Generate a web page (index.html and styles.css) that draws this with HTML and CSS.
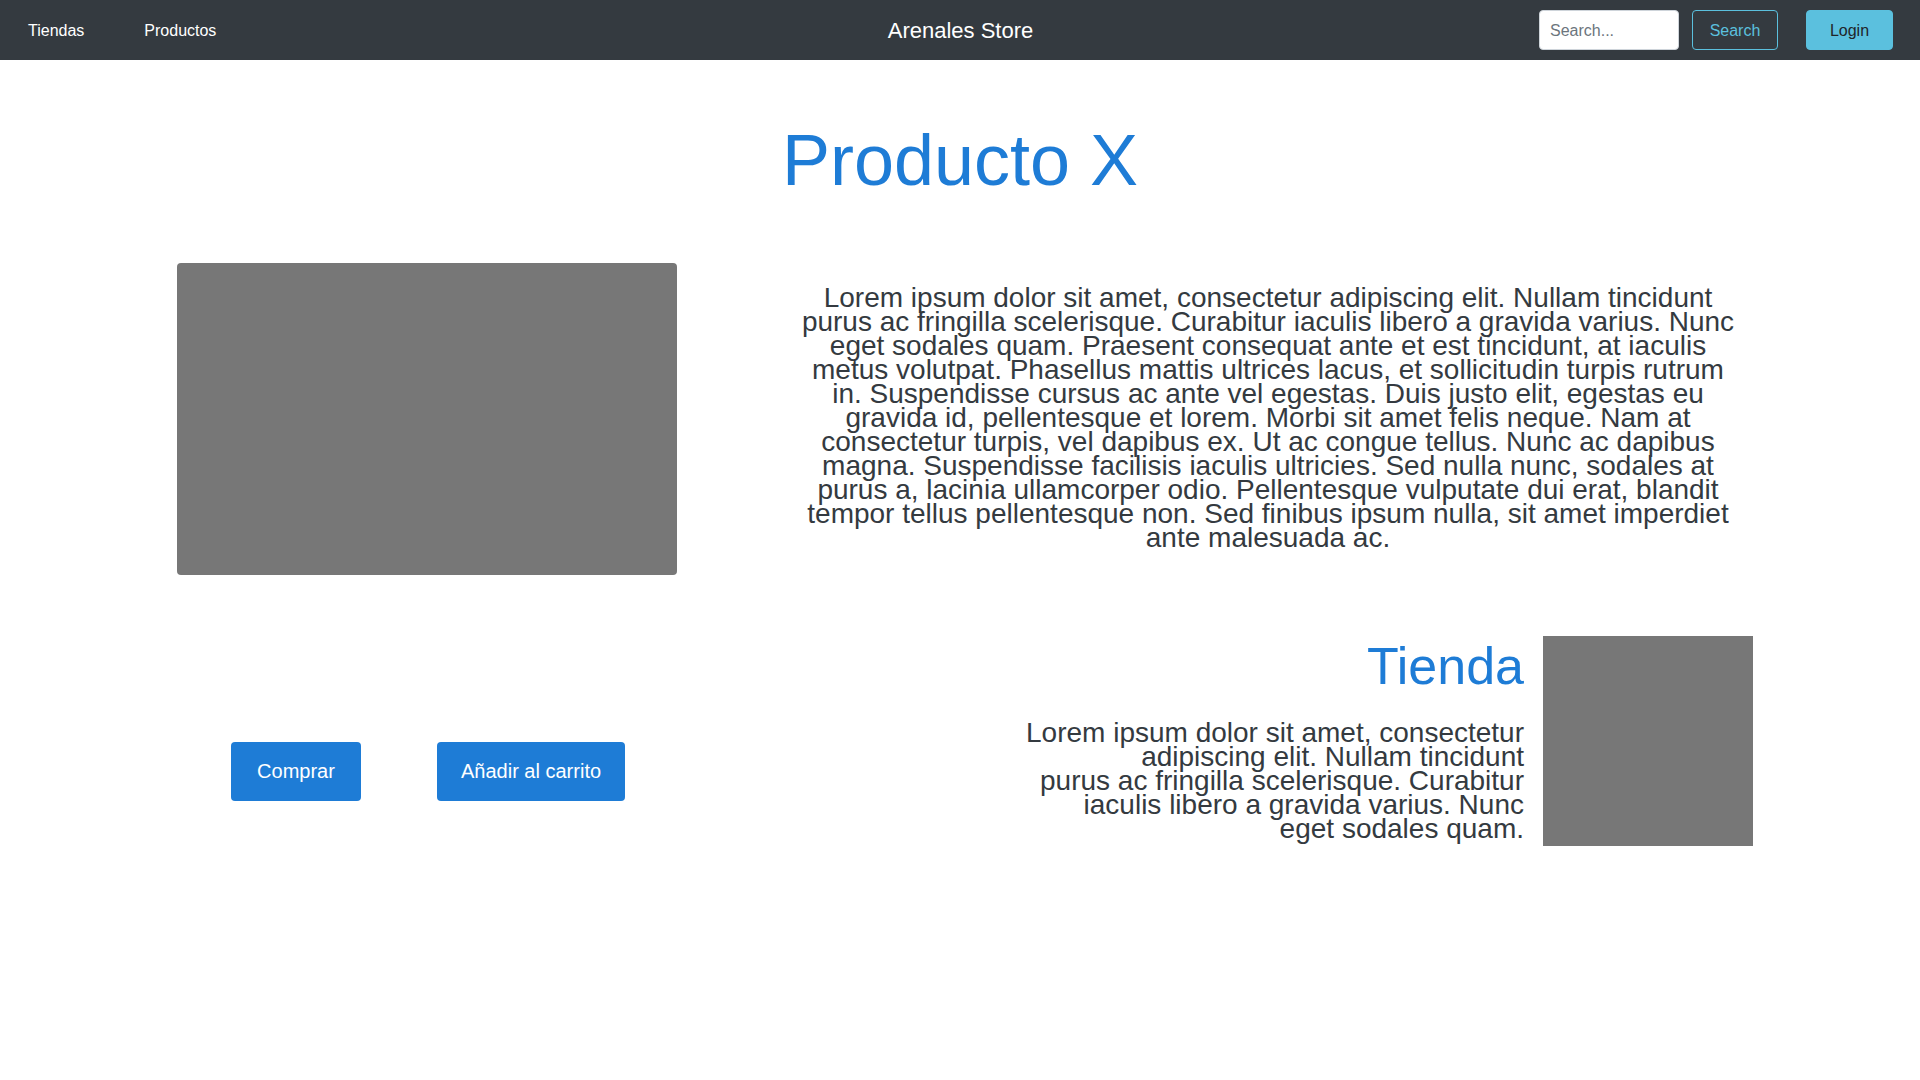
FILE: index.html
```html
<!DOCTYPE html>
<html lang="es">
<head>
<meta charset="utf-8">
<title>Arenales Store</title>
<link rel="stylesheet" href="styles.css">
</head>
<body>
<nav class="navbar">
  <div class="nav-left">
    <a class="nav-link" href="#">Tiendas</a>
    <a class="nav-link" href="#">Productos</a>
  </div>
  <div class="brand">Arenales Store</div>
  <div class="nav-right">
    <input class="search-input" type="text" placeholder="Search...">
    <button class="btn-outline-info">Search</button>
    <button class="btn-info">Login</button>
  </div>
</nav>
<main>
  <h1 class="title">Producto X</h1>
  <section class="product-row">
    <div class="product-image"></div>
    <p class="product-desc">Lorem ipsum dolor sit amet, consectetur adipiscing elit. Nullam tincidunt purus ac fringilla scelerisque. Curabitur iaculis libero a gravida varius. Nunc eget sodales quam. Praesent consequat ante et est tincidunt, at iaculis metus volutpat. Phasellus mattis ultrices lacus, et sollicitudin turpis rutrum in. Suspendisse cursus ac ante vel egestas. Duis justo elit, egestas eu gravida id, pellentesque et lorem. Morbi sit amet felis neque. Nam at consectetur turpis, vel dapibus ex. Ut ac congue tellus. Nunc ac dapibus magna. Suspendisse facilisis iaculis ultricies. Sed nulla nunc, sodales at purus a, lacinia ullamcorper odio. Pellentesque vulputate dui erat, blandit tempor tellus pellentesque non. Sed finibus ipsum nulla, sit amet imperdiet ante malesuada ac.</p>
  </section>
  <section class="store-row">
    <div class="actions">
      <button class="btn-primary btn-buy">Comprar</button>
      <button class="btn-primary">Añadir al carrito</button>
    </div>
    <div class="store">
      <div class="store-info">
        <h2 class="store-title">Tienda</h2>
        <p class="store-desc">Lorem ipsum dolor sit amet, consectetur adipiscing elit. Nullam tincidunt<br>purus ac fringilla scelerisque. Curabitur iaculis libero a gravida varius. Nunc eget sodales quam.</p>
      </div>
      <div class="store-image"></div>
    </div>
  </section>
</main>
</body>
</html>
```
FILE: styles.css
```css
* { box-sizing: border-box; }

body {
  margin: 0;
  font-family: "Liberation Sans", Arial, sans-serif;
  background: #ffffff;
  color: #343a40;
}

.navbar {
  height: 60px;
  background: #343a40;
  display: grid;
  grid-template-columns: 1fr auto 1fr;
  align-items: center;
  padding: 0 27px 0 28px;
}

.nav-left {
  display: flex;
  gap: 60px;
  padding-top: 1px;
}

.nav-link {
  color: #ffffff;
  text-decoration: none;
  font-size: 16px;
}

.brand {
  color: #ffffff;
  font-size: 22px;
  padding-top: 1px;
}

.nav-right {
  display: flex;
  justify-content: flex-end;
  align-items: center;
}

.search-input {
  width: 140px;
  height: 40px;
  border: 1px solid #ced4da;
  border-radius: 4px;
  padding: 2px 10px 0;
  font-family: inherit;
  font-size: 16px;
  color: #495057;
  background: #fff;
}

.search-input::placeholder { color: #6c757d; }

.btn-outline-info,
.btn-info {
  height: 40px;
  border-radius: 4px;
  font-family: inherit;
  font-size: 16px;
  padding: 2px 0 0;
}

.btn-outline-info {
  width: 86px;
  margin-left: 13px;
  background: transparent;
  border: 1px solid #5bc0de;
  color: #5bc0de;
}

.btn-info {
  width: 87px;
  margin-left: 28px;
  background: #5bc0de;
  border: 1px solid #5bc0de;
  color: #212529;
}

.title {
  margin: 59px 0 0;
  text-align: center;
  font-size: 72px;
  font-weight: 400;
  line-height: normal;
  color: #1e7cd6;
}

.product-row {
  display: flex;
  align-items: flex-start;
  margin-top: 62px;
}

.product-image {
  width: 500px;
  height: 312px;
  margin-left: 177px;
  background: #777777;
  border-radius: 4px;
  flex: none;
}

.product-desc {
  width: 940px;
  margin: 23px 0 0 121px;
  font-size: 28px;
  line-height: 24px;
  text-align: center;
  color: #343a40;
}

.store-row {
  display: flex;
  justify-content: space-between;
  align-items: flex-start;
  margin-top: 61px;
}

.actions {
  display: flex;
  gap: 76px;
  margin: 106px 0 0 231px;
}

.btn-primary {
  height: 59px;
  padding: 0 24px;
  border: none;
  border-radius: 4px;
  background: #1e7cd6;
  color: #ffffff;
  font-family: inherit;
  font-size: 20px;
}

.btn-buy {
  min-width: 130px;
}

.store {
  display: flex;
  gap: 19px;
  margin-right: 167px;
}

.store-info {
  width: 500px;
  text-align: right;
}

.store-title {
  margin: 0;
  font-size: 52px;
  font-weight: 400;
  line-height: normal;
  color: #1e7cd6;
}

.store-desc {
  margin: 25px 0 0;
  font-size: 28px;
  line-height: 24px;
  color: #343a40;
}

.store-image {
  width: 210px;
  height: 210px;
  background: #777777;
  flex: none;
}
```
